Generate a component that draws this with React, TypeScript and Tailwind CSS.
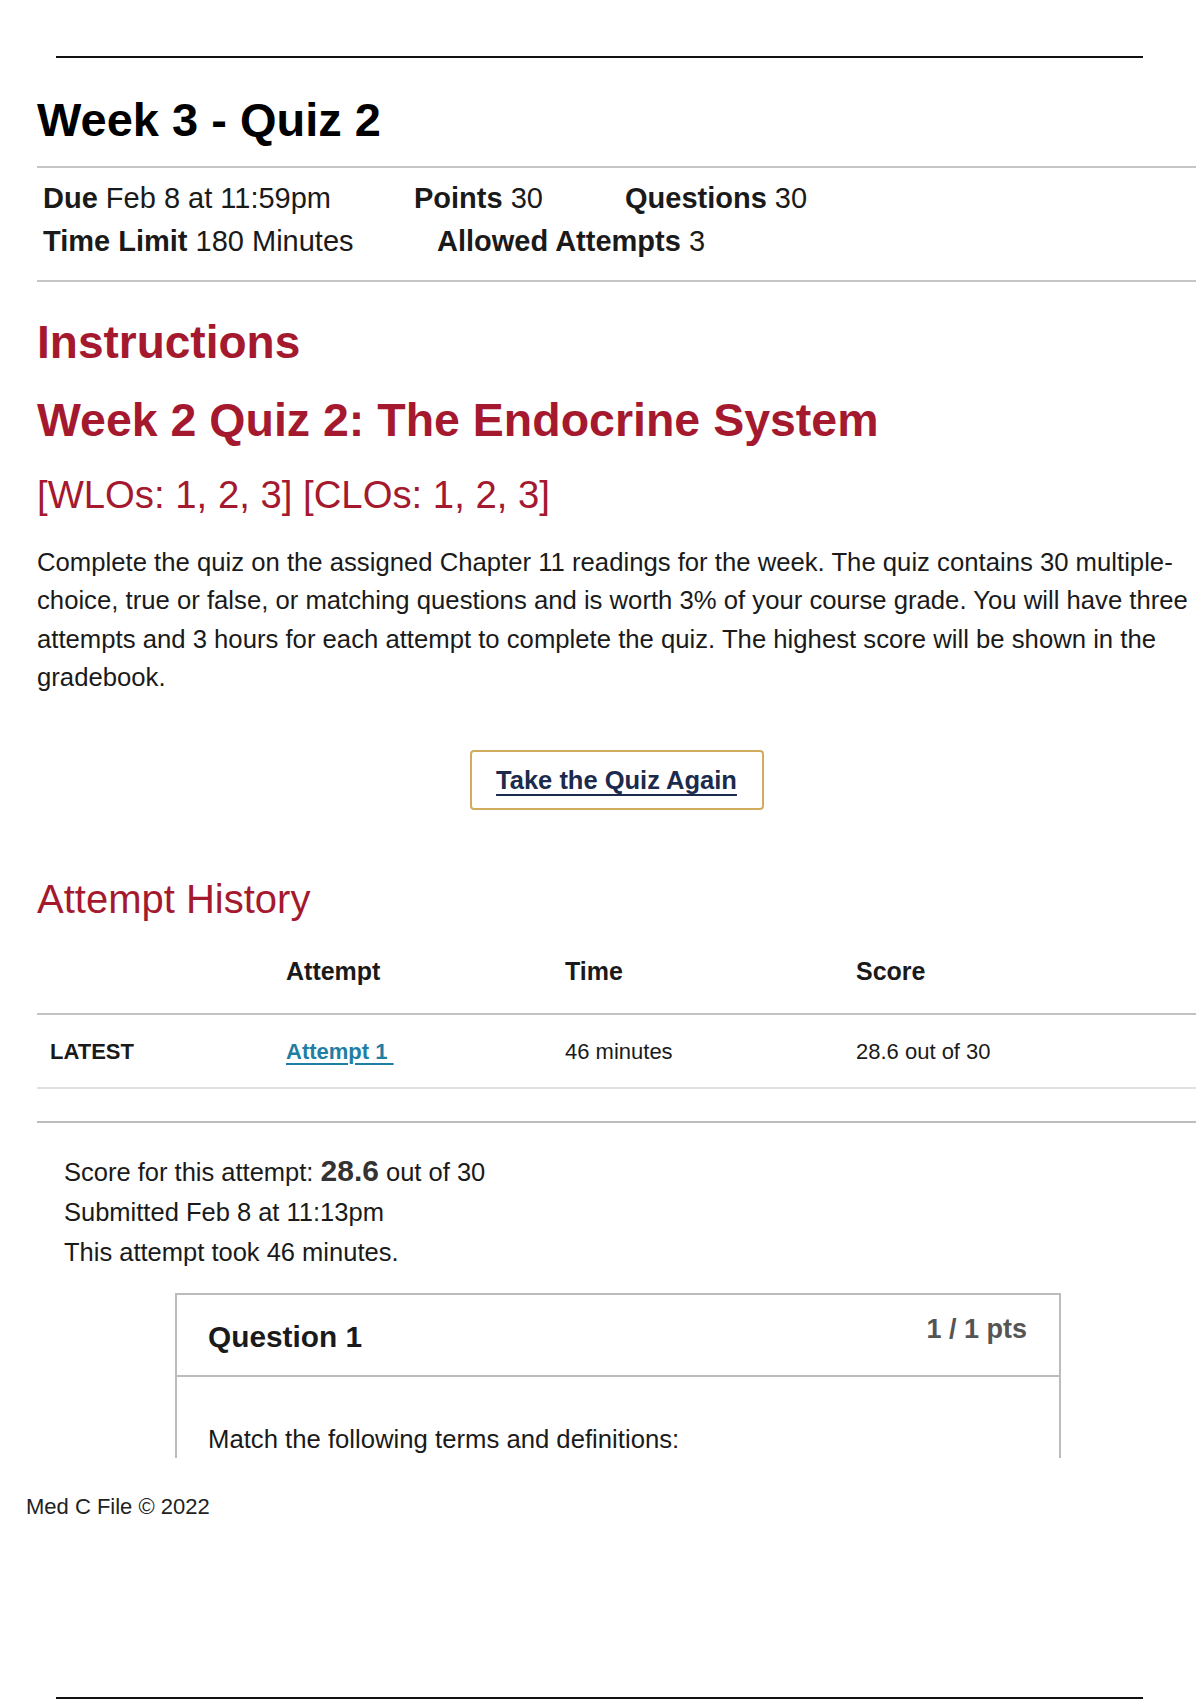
export default function App() {
  return (
    <div className="w-[1200px] h-[1700px] bg-white text-[#1a1a1a] font-['Liberation_Sans',Arial,sans-serif] flex flex-col">
      {/* page top rule */}
      <div className="mt-[56px] ml-[56px] w-[1087px] h-[2px] bg-[#111]" />

      <div className="pl-[37px] pr-[4px] flex flex-col">
        <h1 className="mt-[34px] text-[47px] leading-[56px] font-bold text-black">Week 3 - Quiz 2</h1>
        <div className="mt-[18px] h-[2px] bg-[#c6c6c6]" />

        {/* quiz meta */}
        <div className="mt-[9px] ml-[6px] text-[29px] leading-[43px]">
          <div className="flex">
            <div className="w-[371px]">
              <span className="font-bold">Due</span> Feb 8 at 11:59pm
            </div>
            <div className="w-[211px]">
              <span className="font-bold">Points</span> 30
            </div>
            <div>
              <span className="font-bold">Questions</span> 30
            </div>
          </div>
          <div className="flex">
            <div className="w-[394px]">
              <span className="font-bold">Time Limit</span> 180 Minutes
            </div>
            <div>
              <span className="font-bold">Allowed Attempts</span> 3
            </div>
          </div>
        </div>
        <div className="mt-[17px] h-[2px] bg-[#c6c6c6]" />

        {/* instructions */}
        <h2 className="mt-[32px] text-[46px] leading-[56px] font-bold text-[#a5192f]">Instructions</h2>
        <h3 className="mt-[22px] text-[46.5px] leading-[56px] font-bold text-[#a5192f]">
          Week 2 Quiz 2: The Endocrine System
        </h3>
        <p className="mt-[24px] text-[38.3px] leading-[46px] text-[#a5192f]">[WLOs: 1, 2, 3] [CLOs: 1, 2, 3]</p>
        <p className="mt-[25px] text-[25.7px] leading-[38.3px] whitespace-nowrap">
          Complete the quiz on the assigned Chapter 11 readings for the week. The quiz contains 30 multiple-
          <br />
          choice, true or false, or matching questions and is worth 3% of your course grade. You will have three
          <br />
          attempts and 3 hours for each attempt to complete the quiz. The highest score will be shown in the
          <br />
          gradebook.
        </p>

        <div className="mt-[54px] flex justify-center">
          <button className="w-[294px] h-[60px] rounded-[4px] border-2 border-[#d2ac5e] bg-white flex items-center justify-center">
            <span className="text-[25.5px] font-bold text-[#1c2a4d] underline underline-offset-[5px] decoration-2">
              Take the Quiz Again
            </span>
          </button>
        </div>

        {/* attempt history */}
        <h2 className="mt-[65px] text-[40px] leading-[48px] text-[#a5192f]">Attempt History</h2>
        <div className="grid grid-cols-[249px_279px_291px_1fr] h-[92px] items-end pb-[28px] text-[25px] leading-[28px] font-bold border-b-2 border-[#c2c2c2]">
          <div />
          <div>Attempt</div>
          <div>Time</div>
          <div>Score</div>
        </div>
        <div className="grid grid-cols-[249px_279px_291px_1fr] h-[74px] items-center text-[22px] border-b-2 border-[#e0e0e0]">
          <div className="pl-[13px] font-bold">LATEST</div>
          <div>
            <a className="font-bold text-[#1f7ea3] underline underline-offset-[4px] decoration-2">Attempt 1&nbsp;</a>
          </div>
          <div>46 minutes</div>
          <div>28.6 out of 30</div>
        </div>
        <div className="mt-[32px] h-[2px] bg-[#bdbdbd]" />

        {/* submission summary */}
        <div className="mt-[28px] ml-[27px] text-[25.5px] leading-[40px]">
          <div>
            Score for this attempt: <span className="text-[30px] font-bold text-[#333]">28.6</span> out of 30
          </div>
          <div>Submitted Feb 8 at 11:13pm</div>
          <div>This attempt took 46 minutes.</div>
        </div>

        {/* question card, cut by the page break */}
        <div className="mt-[21px] ml-[138px] w-[886px] h-[165px] overflow-hidden border-x-2 border-t-2 border-[#bcbcbc]">
          <div className="h-[82px] flex justify-between items-start pl-[31px] pr-[32px] border-b-2 border-[#bcbcbc]">
            <div className="mt-[25px] text-[29.8px] leading-[34px] font-bold">Question 1</div>
            <div className="mt-[17px] text-[27px] leading-[34px] font-bold text-[#555]">1 / 1 pts</div>
          </div>
          <div className="pl-[31px] pt-[46px] text-[25.7px] leading-[32px]">Match the following terms and definitions:</div>
        </div>
      </div>

      <div className="mt-[36px] ml-[26px] text-[22px] leading-[26px] text-[#222]">Med C File © 2022</div>

      {/* page bottom rule */}
      <div className="mt-auto mb-[1px] ml-[56px] w-[1087px] h-[2px] bg-[#111]" />
    </div>
  );
}
